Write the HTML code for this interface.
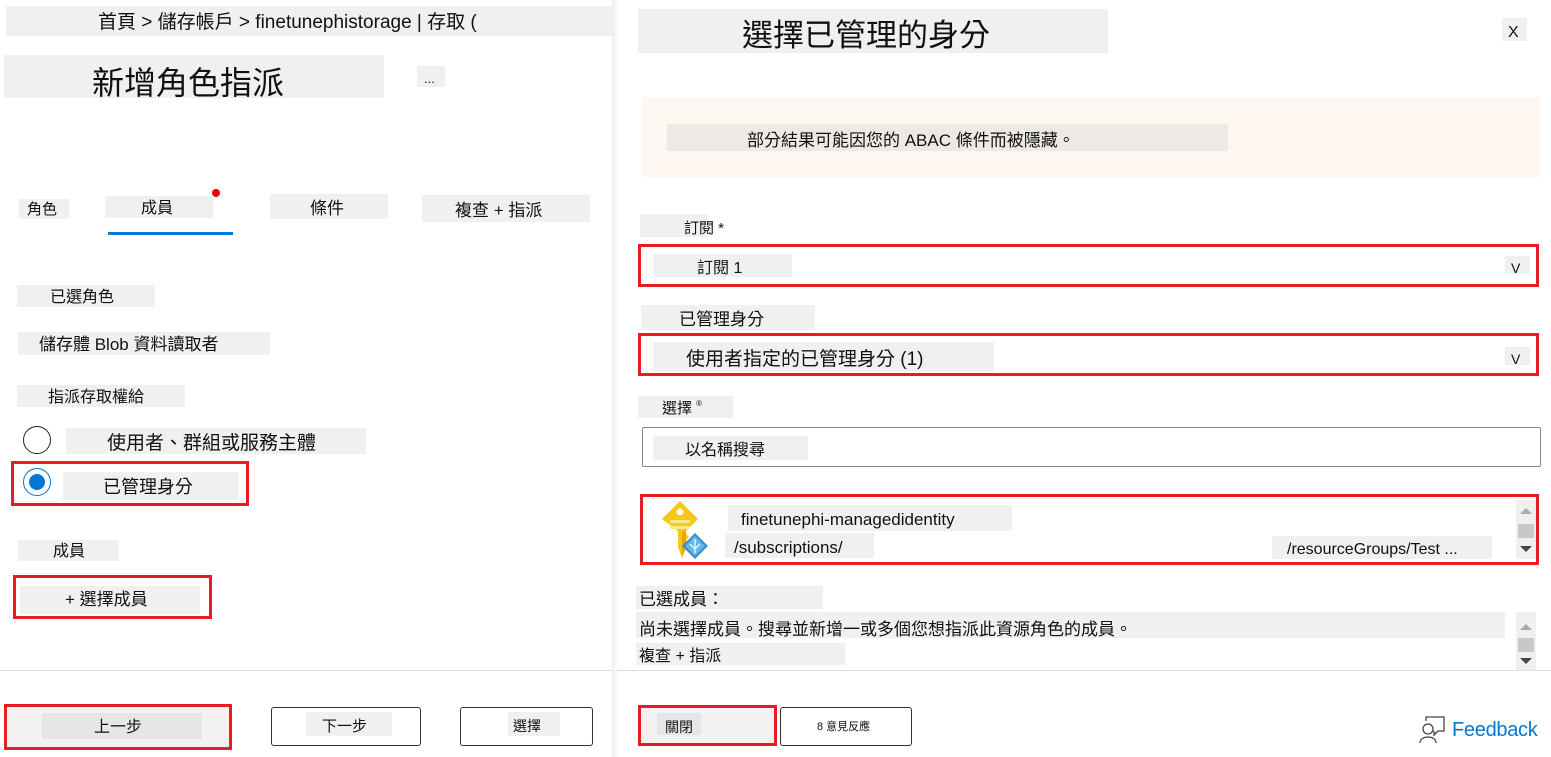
<!DOCTYPE html>
<html><head><meta charset="utf-8"><style>
*{margin:0;padding:0;box-sizing:border-box}
body{width:1551px;height:757px;position:relative;background:#fff;overflow:hidden;font-family:"Liberation Sans","Noto Sans CJK TC",sans-serif;color:#111}
.a{position:absolute}
.g{position:absolute;background:#f0f0f0;white-space:nowrap}
.r{position:absolute;border:3px solid #e81c24}
.b{position:absolute;border:1px solid #333;border-radius:3px;background:#fff}
.sb{position:absolute;background:#f0f0f0;width:20px}
.up{position:absolute;left:4px;width:0;height:0;border-left:6px solid transparent;border-right:6px solid transparent;border-bottom:6px solid #aaa}
.dn{position:absolute;left:4px;width:0;height:0;border-left:6px solid transparent;border-right:6px solid transparent;border-top:6px solid #444}
.th{position:absolute;left:2px;width:16px;height:14px;background:#c8c8c8}
</style></head><body>
<div class="a" style="left:612px;top:0;width:5px;height:757px;background:linear-gradient(to right,#eee,#fafafa)"></div>

<div class="g" style="left:6px;top:6px;width:606px;height:30px;font-size:19px;line-height:34px;padding-left:92px">首頁 &gt; 儲存帳戶 &gt; finetunephistorage | 存取 (</div>
<div class="g" style="left:4px;top:55px;width:380px;height:43px;font-size:32px;line-height:56px;padding-left:88px">新增角色指派</div>
<div class="g" style="left:417px;top:66px;width:28px;height:21px;font-size:13px;line-height:26px;padding-left:7px">...</div>

<div class="g" style="left:19px;top:199px;width:50px;height:20px;font-size:15px;line-height:22px;padding-left:8px">角色</div>
<div class="g" style="left:105px;top:196px;width:108px;height:22px;font-size:16px;line-height:26px;padding-left:36px">成員</div>
<div class="a" style="left:212px;top:189px;width:8px;height:8px;border-radius:50%;background:#e00"></div>
<div class="a" style="left:108px;top:232px;width:125px;height:3px;background:#0078d4"></div>
<div class="g" style="left:270px;top:194px;width:118px;height:25px;font-size:17px;line-height:30px;padding-left:40px">條件</div>
<div class="g" style="left:422px;top:195px;width:168px;height:27px;font-size:17px;line-height:32px;padding-left:33px">複查 + 指派</div>

<div class="g" style="left:17px;top:285px;width:138px;height:22px;font-size:16px;line-height:26px;padding-left:33px">已選角色</div>
<div class="g" style="left:18px;top:332px;width:252px;height:23px;font-size:17px;line-height:26px;padding-left:21px">儲存體 Blob 資料讀取者</div>

<div class="g" style="left:17px;top:385px;width:168px;height:22px;font-size:16px;line-height:26px;padding-left:31px">指派存取權給</div>
<div class="a" style="left:23px;top:426px;width:28px;height:28px;border:1.5px solid #222;border-radius:50%"></div>
<div class="g" style="left:66px;top:428px;width:300px;height:26px;font-size:19px;line-height:32px;padding-left:41px">使用者、群組或服務主體</div>
<div class="r" style="left:11px;top:461px;width:238px;height:45px"></div>
<div class="a" style="left:23px;top:468px;width:28px;height:28px;border:1.5px solid #0078d4;border-radius:50%"></div>
<div class="a" style="left:29px;top:474px;width:16px;height:16px;border-radius:50%;background:#0078d4"></div>
<div class="g" style="left:63px;top:472px;width:176px;height:28px;font-size:18px;line-height:30px;padding-left:40px">已管理身分</div>

<div class="g" style="left:18px;top:540px;width:101px;height:21px;font-size:16px;line-height:24px;padding-left:35px">成員</div>
<div class="r" style="left:13px;top:575px;width:199px;height:44px"></div>
<div class="g" style="left:20px;top:586px;width:180px;height:28px;font-size:17px;line-height:28px;padding-left:45px">+ 選擇成員</div>

<div class="a" style="left:0;top:670px;width:612px;height:1px;background:#ddd"></div>

<div class="r" style="left:4px;top:704px;width:228px;height:46px;background:#f3f2f1"></div>
<div class="g" style="left:42px;top:713px;width:160px;height:26px;background:#e6e6e6;font-size:16px;line-height:30px;padding-left:52px">上一步</div>
<div class="b" style="left:271px;top:707px;width:150px;height:39px"></div>
<div class="g" style="left:306px;top:712px;width:86px;height:24px;font-size:15px;line-height:30px;padding-left:16px">下一步</div>
<div class="b" style="left:460px;top:707px;width:133px;height:39px"></div>
<div class="g" style="left:508px;top:712px;width:52px;height:24px;font-size:14px;line-height:28px;padding-left:5px">選擇</div>

<div class="g" style="left:638px;top:9px;width:470px;height:44px;font-size:31px;line-height:54px;padding-left:104px">選擇已管理的身分</div>
<div class="g" style="left:1502px;top:18px;width:25px;height:23px;font-size:16px;line-height:30px;padding-left:6px">X</div>

<div class="a" style="left:642px;top:97px;width:898px;height:80px;background:#fdf6f1"></div>
<div class="g" style="left:667px;top:124px;width:561px;height:27px;background:#ede9e4;font-size:17px;line-height:34px;padding-left:80px">部分結果可能因您的 ABAC 條件而被隱藏。</div>

<div class="g" style="left:640px;top:214px;width:68px;height:23px;font-size:15px;line-height:30px;padding-left:44px">訂閱 *</div>
<div class="r" style="left:638px;top:244px;width:901px;height:43px"></div>
<div class="g" style="left:653px;top:254px;width:139px;height:23px;font-size:16px;line-height:30px;padding-left:44px">訂閱 1</div>
<div class="g" style="left:1505px;top:256px;width:25px;height:18px;font-size:14px;line-height:24px;padding-left:6px">V</div>

<div class="g" style="left:641px;top:305px;width:174px;height:25px;font-size:17px;line-height:30px;padding-left:38px">已管理身分</div>
<div class="r" style="left:638px;top:333px;width:901px;height:43px"></div>
<div class="g" style="left:653px;top:342px;width:341px;height:29px;font-size:19px;line-height:36px;padding-left:33px">使用者指定的已管理身分 (1)</div>
<div class="g" style="left:1505px;top:347px;width:25px;height:18px;font-size:14px;line-height:24px;padding-left:6px">V</div>

<div class="g" style="left:638px;top:396px;width:95px;height:22px;font-size:15px;line-height:26px;padding-left:24px">選擇 <span style="font-size:8px;vertical-align:top;line-height:16px">®</span></div>
<div class="a" style="left:642px;top:427px;width:899px;height:40px;border:1px solid #888;border-radius:2px"></div>
<div class="g" style="left:653px;top:436px;width:155px;height:24px;font-size:16px;line-height:30px;padding-left:32px">以名稱搜尋</div>

<div class="r" style="left:640px;top:494px;width:899px;height:71px"></div>
<svg class="a" style="left:658px;top:500px" width="54" height="60" viewBox="0 0 54 60">
<path d="M22 1 L40 19 L28 31 L28 34 L31 37 L28 40 L31 43 L28 47 L24 58 L20 47 L20 31 L4 19 Z" fill="#f7c815"/>
<path d="M24 31 L28 31 L28 47 L24 58 Z" fill="#e8a600"/>
<circle cx="22" cy="12" r="3.5" fill="#fff"/>
<rect x="12" y="20" width="20" height="3" fill="#fde88a"/><rect x="12" y="26" width="20" height="3" fill="#fde88a"/>
<path d="M37 33 L50 46 L37 59 L24 46 Z" fill="#3e8ecf"/>
<path d="M37 36 L47 46 L37 56 L27 46 Z" fill="#63b8e6"/>
<path d="M37 39 L37 53 M32 44 L37 49 L42 44" stroke="#fff" stroke-width="1.2" fill="none"/>
</svg>
<div class="g" style="left:728px;top:505px;width:284px;height:26px;font-size:17px;line-height:30px;padding-left:13px">finetunephi-managedidentity</div>
<div class="g" style="left:725px;top:533px;width:149px;height:25px;font-size:17px;line-height:30px;padding-left:9px">/subscriptions/</div>
<div class="g" style="left:1272px;top:536px;width:220px;height:23px;font-size:16px;line-height:28px;padding-left:15px">/resourceGroups/Test ...</div>
<div class="sb" style="left:1516px;top:500px;height:59px"><div class="up" style="top:8px"></div><div class="th" style="top:24px"></div><div class="dn" style="top:46px"></div></div>

<div class="g" style="left:636px;top:586px;width:187px;height:23px;font-size:17px;line-height:28px;padding-left:3px">已選成員：</div>
<div class="g" style="left:636px;top:612px;width:869px;height:26px;font-size:17px;line-height:36px;padding-left:3px">尚未選擇成員。搜尋並新增一或多個您想指派此資源角色的成員。</div>
<div class="g" style="left:636px;top:643px;width:209px;height:22px;font-size:16px;line-height:28px;padding-left:3px">複查 + 指派</div>
<div class="sb" style="left:1516px;top:612px;height:58px"><div class="up" style="top:12px"></div><div class="th" style="top:26px"></div><div class="dn" style="top:46px"></div></div>

<div class="a" style="left:617px;top:670px;width:934px;height:1px;background:#ddd"></div>

<div class="r" style="left:638px;top:705px;width:139px;height:41px;background:#f3f2f1"></div>
<div class="g" style="left:657px;top:713px;width:44px;height:22px;background:#e6e6e6;font-size:14px;line-height:28px;padding-left:8px">關閉</div>
<div class="b" style="left:780px;top:707px;width:132px;height:39px"></div>
<div class="a" style="left:817px;top:719px;font-size:11px;line-height:16px;white-space:nowrap">8 意見反應</div>

<svg class="a" style="left:1418px;top:715px" width="30" height="28" viewBox="0 0 30 28">
<path d="M8 6 V2 H26 V16 H20 L16 20 V16" fill="none" stroke="#444" stroke-width="1.3"/>
<circle cx="10" cy="14" r="5" fill="none" stroke="#444" stroke-width="1.3"/>
<path d="M2 28 C2 20 18 20 18 28" fill="none" stroke="#444" stroke-width="1.3"/>
</svg>
<div class="a" style="left:1452px;top:716px;font-size:20px;color:#0078d4;line-height:28px;letter-spacing:-0.3px">Feedback</div>
</body></html>
